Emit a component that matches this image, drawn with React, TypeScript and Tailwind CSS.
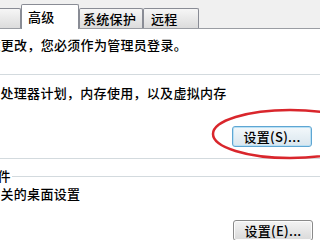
import React from 'react';

interface TabItem {
  label: string;
  width: number;
  pad: number;
  active?: boolean;
}

const tabs: TabItem[] = [
  { label: '硬件', width: 61, pad: 7 },
  { label: '高级', width: 58, pad: 6, active: true },
  { label: '系统保护', width: 64, pad: 3 },
  { label: '远程', width: 56, pad: 7 },
];

function WinButton({ label, focused }: { label: string; focused?: boolean }) {
  return (
    <button
      className={
        focused
          ? 'h-[21px] w-[80px] rounded-[3px] border border-[#5ea6d3] bg-gradient-to-b from-[#f3f8fb] to-[#d9e6ee] shadow-[inset_0_0_0_1px_#b9e0f4] text-[13px] leading-none text-black'
          : 'h-[21px] w-[80px] rounded-[3px] border border-[#8a8a8a] bg-gradient-to-b from-[#f4f4f4] to-[#d9d9d9] shadow-[inset_0_0_0_1px_#fcfcfc] text-[13px] leading-none text-black'
      }
    >
      {label}
    </button>
  );
}

export default function App() {
  return (
    <div className="relative w-[320px] h-[240px] overflow-hidden bg-white font-['Noto_Sans_CJK_SC','Microsoft_YaHei',sans-serif] text-[13px] font-medium tracking-[0.3px] text-black">
      {/* tab strip */}
      <div className="h-[29px] bg-[#f0f0f0] border-b border-[#9a9da3] flex items-end">
        {tabs.map((t, i) => (
          <div
            key={t.label}
            style={{ width: t.width, paddingLeft: t.pad }}
            className={
              t.active
                ? 'relative z-10 h-[25px] mb-[-1px] flex items-center bg-white border border-b-0 border-[#898c95] rounded-t-[2px]'
                : `h-[20px] flex items-center bg-gradient-to-b from-[#f6f6f6] to-[#dcdcdc] border border-b-0 border-[#898c95] rounded-t-[2px] ${i === 0 ? 'ml-[-40px]' : ''}`
            }
          >
            {t.label}
          </div>
        ))}
      </div>

      {/* page body, shifted left: dialog is cropped */}
      <div className="ml-[-79px] w-[405px]">
        <p className="mt-[7px] leading-[18px] whitespace-nowrap">要进行大多数更改，您必须作为管理员登录。</p>

        <fieldset className="mt-[11px] border border-[#d3dade] rounded-[3px] pb-[11px]">
          <legend className="ml-[8px] px-[1px] leading-[18px]">性能</legend>
          <p className="pl-[12px] mt-[1px] leading-[18px] whitespace-nowrap">视觉效果，处理器计划，内存使用，以及虚拟内存</p>
          <div className="mt-[24px] flex justify-end pr-[13px]">
            <WinButton label="设置(S)..." focused />
          </div>
        </fieldset>

        <fieldset className="mt-[8px] border border-[#d3dade] rounded-[3px] pb-[12px]">
          <legend className="ml-[8px] px-[1px] leading-[18px]">用户配置文件</legend>
          <p className="pl-[12px] leading-[18px] whitespace-nowrap">与您登录有关的桌面设置</p>
          <div className="mt-[17px] flex justify-end pr-[12px]">
            <WinButton label="设置(E)..." />
          </div>
        </fieldset>
      </div>

      {/* red annotation circle */}
      <svg className="absolute left-0 top-0 pointer-events-none" width="320" height="240">
        <ellipse cx="290" cy="134" rx="77" ry="24" fill="none" stroke="#d9262c" strokeWidth="2.5" />
      </svg>
    </div>
  );
}
